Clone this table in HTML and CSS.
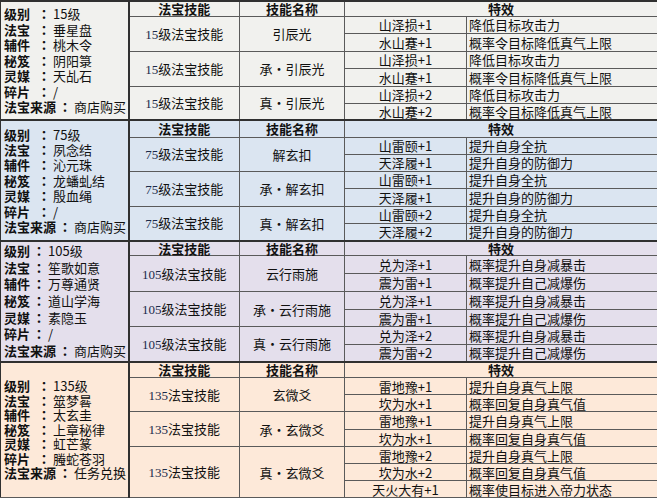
FILE: index.html
```html
<!DOCTYPE html>
<html lang="zh-CN">
<head>
<meta charset="utf-8">
<title>法宝技能</title>
<link rel="stylesheet" href="styles.css">
</head>
<body>
<table class="t">
<colgroup><col class="c1"><col class="c2"><col class="c3"><col class="c4"><col class="c5"></colgroup>
<tbody class="s s1">
<tr class="hd h15">
<td class="info" rowspan="7">
<div class="ln"><b class="k">级别</b><b class="c">：</b>15级</div>
<div class="ln"><b class="k">法宝</b><b class="c">：</b>垂星盘</div>
<div class="ln"><b class="k">辅件</b><b class="c">：</b>桃木令</div>
<div class="ln"><b class="k">秘笈</b><b class="c">：</b>阴阳箓</div>
<div class="ln"><b class="k">灵媒</b><b class="c">：</b>天乩石</div>
<div class="ln"><b class="k">碎片</b><b class="c">：</b>/</div>
<div class="ln"><b class="kw">法宝来源</b><b class="c">：</b>商店购买</div>
</td>
<th>法宝技能</th><th>技能名称</th><th colspan="2">特效</th></tr>
<tr class="h17"><td class="sk" rowspan="2"><span class="num">15</span>级法宝技能</td><td class="nm" rowspan="2">引辰光</td><td class="ef">山泽损+1</td><td class="ds">降低目标攻击力</td></tr>
<tr class="h18 sub"><td class="ef">水山蹇+1</td><td class="ds">概率令目标降低真气上限</td></tr>
<tr class="h17 grp"><td class="sk" rowspan="2"><span class="num">15</span>级法宝技能</td><td class="nm" rowspan="2">承<span class="dot">·</span>引辰光</td><td class="ef">山泽损+1</td><td class="ds">降低目标攻击力</td></tr>
<tr class="h18 sub"><td class="ef">水山蹇+1</td><td class="ds">概率令目标降低真气上限</td></tr>
<tr class="h17 grp"><td class="sk" rowspan="2"><span class="num">15</span>级法宝技能</td><td class="nm" rowspan="2">真<span class="dot">·</span>引辰光</td><td class="ef">山泽损+2</td><td class="ds">降低目标攻击力</td></tr>
<tr class="h17 sub"><td class="ef">水山蹇+2</td><td class="ds">概率令目标降低真气上限</td></tr>
</tbody>
<tbody class="s s2">
<tr class="hd h17">
<td class="info" rowspan="7">
<div class="ln"><b class="k">级别</b><b class="c">：</b>75级</div>
<div class="ln"><b class="k">法宝</b><b class="c">：</b>夙念结</div>
<div class="ln"><b class="k">辅件</b><b class="c">：</b>沁元珠</div>
<div class="ln"><b class="k">秘笈</b><b class="c">：</b>龙蟠虬结</div>
<div class="ln"><b class="k">灵媒</b><b class="c">：</b>殷血绳</div>
<div class="ln"><b class="k">碎片</b><b class="c">：</b>/</div>
<div class="ln"><b class="kw">法宝来源</b><b class="c">：</b>商店购买</div>
</td>
<th>法宝技能</th><th>技能名称</th><th colspan="2">特效</th></tr>
<tr class="h17"><td class="sk" rowspan="2"><span class="num">75</span>级法宝技能</td><td class="nm" rowspan="2">解玄扣</td><td class="ef">山雷颐+1</td><td class="ds">提升自身全抗</td></tr>
<tr class="h17 sub"><td class="ef">天泽履+1</td><td class="ds">提升自身的防御力</td></tr>
<tr class="h17 grp"><td class="sk" rowspan="2"><span class="num">75</span>级法宝技能</td><td class="nm" rowspan="2">承<span class="dot">·</span>解玄扣</td><td class="ef">山雷颐+1</td><td class="ds">提升自身全抗</td></tr>
<tr class="h18 sub"><td class="ef">天泽履+1</td><td class="ds">提升自身的防御力</td></tr>
<tr class="h17 grp"><td class="sk" rowspan="2"><span class="num">75</span>级法宝技能</td><td class="nm" rowspan="2">真<span class="dot">·</span>解玄扣</td><td class="ef">山雷颐+2</td><td class="ds">提升自身全抗</td></tr>
<tr class="h18 sub"><td class="ef">天泽履+2</td><td class="ds">提升自身的防御力</td></tr>
</tbody>
<tbody class="s s3">
<tr class="hd h14">
<td class="info" rowspan="7">
<div class="ln"><b class="k">级别</b><b class="c">：</b>105级</div>
<div class="ln"><b class="k">法宝</b><b class="c">：</b>笙歌如意</div>
<div class="ln"><b class="k">辅件</b><b class="c">：</b>万尊通贤</div>
<div class="ln"><b class="k">秘笈</b><b class="c">：</b>道山学海</div>
<div class="ln"><b class="k">灵媒</b><b class="c">：</b>素隐玉</div>
<div class="ln"><b class="k">碎片</b><b class="c">：</b>/</div>
<div class="ln"><b class="kw">法宝来源</b><b class="c">：</b>商店购买</div>
</td>
<th>法宝技能</th><th>技能名称</th><th colspan="2">特效</th></tr>
<tr class="h18"><td class="sk" rowspan="2"><span class="num">105</span>级法宝技能</td><td class="nm" rowspan="2">云行雨施</td><td class="ef">兑为泽+1</td><td class="ds">概率提升自身减暴击</td></tr>
<tr class="h18 sub"><td class="ef">震为雷+1</td><td class="ds">概率提升自己减爆伤</td></tr>
<tr class="h18 grp"><td class="sk" rowspan="2"><span class="num">105</span>级法宝技能</td><td class="nm" rowspan="2">承<span class="dot">·</span>云行雨施</td><td class="ef">兑为泽+1</td><td class="ds">概率提升自身减暴击</td></tr>
<tr class="h17 sub"><td class="ef">震为雷+1</td><td class="ds">概率提升自己减爆伤</td></tr>
<tr class="h18 grp"><td class="sk" rowspan="2"><span class="num">105</span>级法宝技能</td><td class="nm" rowspan="2">真<span class="dot">·</span>云行雨施</td><td class="ef">兑为泽+2</td><td class="ds">概率提升自身减暴击</td></tr>
<tr class="h17 sub"><td class="ef">震为雷+2</td><td class="ds">概率提升自己减爆伤</td></tr>
</tbody>
<tbody class="s s4">
<tr class="hd h16">
<td class="info" rowspan="8">
<div class="ln"><b class="k">级别</b><b class="c">：</b>135级</div>
<div class="ln"><b class="k">法宝</b><b class="c">：</b>筮梦晷</div>
<div class="ln"><b class="k">辅件</b><b class="c">：</b>太玄圭</div>
<div class="ln"><b class="k">秘笈</b><b class="c">：</b>上章秘律</div>
<div class="ln"><b class="k">灵媒</b><b class="c">：</b>虹芒篆</div>
<div class="ln"><b class="k">碎片</b><b class="c">：</b>螣蛇苍羽</div>
<div class="ln"><b class="kw">法宝来源</b><b class="c">：</b>任务兑换</div>
</td>
<th>法宝技能</th><th>技能名称</th><th colspan="2">特效</th></tr>
<tr class="h17"><td class="sk" rowspan="2"><span class="num">135</span>法宝技能</td><td class="nm" rowspan="2">玄微爻</td><td class="ef">雷地豫+1</td><td class="ds">提升自身真气上限</td></tr>
<tr class="h17 sub"><td class="ef">坎为水+1</td><td class="ds">概率回复自身真气值</td></tr>
<tr class="h18 grp"><td class="sk" rowspan="2"><span class="num">135</span>法宝技能</td><td class="nm" rowspan="2">承<span class="dot">·</span>玄微爻</td><td class="ef">雷地豫+1</td><td class="ds">提升自身真气上限</td></tr>
<tr class="h17 sub"><td class="ef">坎为水+1</td><td class="ds">概率回复自身真气值</td></tr>
<tr class="h17 grp"><td class="sk" rowspan="3"><span class="num">135</span>法宝技能</td><td class="nm" rowspan="3">真<span class="dot">·</span>玄微爻</td><td class="ef">雷地豫+2</td><td class="ds">提升自身真气上限</td></tr>
<tr class="h17 sub"><td class="ef">坎为水+2</td><td class="ds">概率回复自身真气值</td></tr>
<tr class="h17 sub"><td class="ef">天火大有+1</td><td class="ds">概率使目标进入帝力状态</td></tr>
</tbody>
</table>
</body>
</html>
```
FILE: styles.css
```css
html, body {
  margin: 0;
  padding: 0;
  background: #ffffff;
}
body {
  font-family: "Noto Sans CJK SC", "Liberation Sans", sans-serif;
  font-size: 13px;
  color: #111;
}
.t {
  border-collapse: collapse;
  table-layout: fixed;
  width: 657px;
}
.c1 { width: 128px; }
.c2 { width: 111px; }
.c3 { width: 105px; }
.c4 { width: 122px; }
.c5 { width: 191px; }

.t td, .t th {
  padding: 0;
  line-height: 13px;
  border: 1px solid #5a5a5a;
  white-space: nowrap;
}
.t th {
  font-weight: 700;
  text-align: center;
}
.s1 { background: #f1f1ee; }
.s2 { background: #dbe5f1; }
.s3 { background: #e4dfec; }
.s4 { background: #fde9d9; }

.hd > td, .hd > th {
  border-top: 2px solid #303030;
}
.t .info {
  border-left: 1px solid #303030;
  border-right: 2px solid #303030;
  vertical-align: middle;
  padding-left: 3px;
  text-align: left;
}
.t .sub > td {
  border-top: 1px solid #a8a8a8;
}
.grp > td {
  border-top: 1px solid #404040;
}
.t .ds {
  text-align: left;
  padding-left: 2px;
  border-left: 1px solid #404040;
}
.t .ef {
  text-align: center;
}
.t .sk, .t .nm {
  text-align: center;
  vertical-align: middle;
}
.num {
  font-family: "Liberation Serif", serif;
  color: #1a2a4a;
}
.dot {
  display: inline-block;
  width: 13px;
  text-align: center;
}
.h13 { height: 13px; }
.h14 { height: 14px; }
.h15 { height: 15px; }
.h16 { height: 16px; }
.h17 { height: 17px; }
.h18 { height: 18px; }

.ln { white-space: nowrap; }
.s1 .ln { line-height: 15.6px; }
.s2 .ln { line-height: 15.4px; }
.s3 .ln { line-height: 16.6px; }
.s4 .ln { line-height: 14.5px; }
.k {
  display: inline-block;
  width: 31px;
  font-weight: 700;
}
.s3 .k { width: 26px; }
.kw { font-weight: 700; }
.c {
  display: inline-block;
  width: 18px;
  text-align: center;
  font-weight: 700;
  font-family: "Noto Sans CJK JP", sans-serif;
}
```
